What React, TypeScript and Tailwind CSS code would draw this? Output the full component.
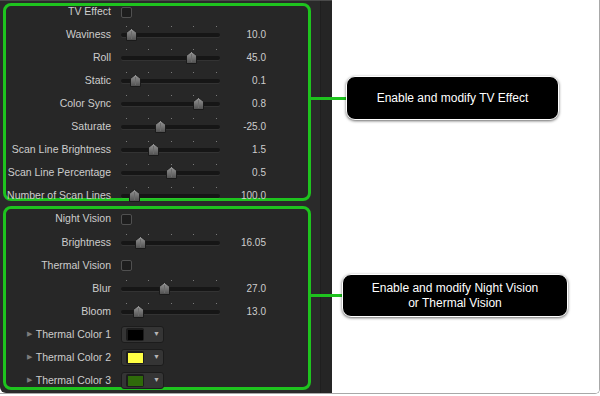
import type { ReactNode } from "react";

const tvRows = [
  { label: "Waviness", value: "10.0", pos: 10 },
  { label: "Roll", value: "45.0", pos: 70 },
  { label: "Static", value: "0.1", pos: 14 },
  { label: "Color Sync", value: "0.8", pos: 77 },
  { label: "Saturate", value: "-25.0", pos: 39 },
  { label: "Scan Line Brightness", value: "1.5", pos: 32 },
  { label: "Scan Line Percentage", value: "0.5", pos: 50 },
  { label: "Number of Scan Lines", value: "100.0", pos: 13 },
];

const thermalColors = [
  { label: "Thermal Color 1", color: "#000000" },
  { label: "Thermal Color 2", color: "#ffff44" },
  { label: "Thermal Color 3", color: "#2f6a0a" },
];

const ticks = [5, 27, 50, 72, 95];

function Thumb() {
  return (
    <svg width="11" height="13" viewBox="0 0 11 13">
      <defs>
        <linearGradient id="thumbG" x1="0" y1="0" x2="0" y2="1">
          <stop offset="0" stopColor="#9a9a9a" />
          <stop offset="1" stopColor="#4e4e4e" />
        </linearGradient>
      </defs>
      <path
        d="M5.5 0.5 L10.5 4.5 L10.5 12.5 L0.5 12.5 L0.5 4.5 Z"
        fill="url(#thumbG)"
        stroke="#1a1a1a"
        strokeWidth="1"
      />
      <line x1="5.5" y1="3" x2="5.5" y2="11" stroke="#6a6a6a" strokeWidth="1" />
    </svg>
  );
}

function Slider({ pos }: { pos: number }) {
  return (
    <div className="relative w-[99px] h-[23px]">
      {ticks.map((t) => (
        <div
          key={t}
          className="absolute top-[3px] w-px h-px bg-[#7a7a7a]"
          style={{ left: t }}
        />
      ))}
      <div className="absolute left-0 right-0 top-[10px] h-[4px] rounded-full bg-[#161616] shadow-[0_1px_0_rgba(255,255,255,0.06)]" />
      <div className="absolute top-[5px]" style={{ left: pos - 5 }}>
        <Thumb />
      </div>
    </div>
  );
}

function Checkbox() {
  return (
    <div className="w-[11px] h-[11px] rounded-[2px] border border-[#505050] bg-[#1d1d1d]" />
  );
}

function Row({
  label,
  children,
  value,
  caret,
}: {
  label: string;
  children: ReactNode;
  value?: string;
  caret?: boolean;
}) {
  return (
    <div className="flex items-center h-[23px]">
      <div className="w-[105px] flex items-center">
        {caret && <span className="ml-[21px] text-[7px] text-[#7c7c7c]">▶</span>}
        <span className="flex-1 text-right text-[10.5px] text-[#cdcdcd] whitespace-nowrap">
          {label}
        </span>
      </div>
      <div className="ml-[10px] flex items-center">{children}</div>
      {value && (
        <div className="w-[46px] text-right text-[10px] text-[#cdcdcd]">{value}</div>
      )}
    </div>
  );
}

function ColorWell({ color }: { color: string }) {
  return (
    <div className="flex items-center w-[43px] h-[17px] rounded-[3px] bg-[#353535] border border-[#1c1c1c]">
      <div className="ml-[4px] w-[18px] h-[13px] rounded-[2px] bg-[#1c1c1c] flex items-center justify-center">
        <div className="w-[15px] h-[10px]" style={{ background: color }} />
      </div>
      <span className="ml-[9px] text-[7px] text-[#b5b5b5]">▼</span>
    </div>
  );
}

export default function App() {
  return (
    <div
      className="w-[600px] h-[396px] bg-white relative"
      style={{ fontFamily: '"Liberation Sans", Arial, sans-serif' }}
    >
      <div className="flex w-[600px] h-[394px] border-r border-b border-[#a8a8a8] rounded-br-[5px] overflow-hidden">
        {/* Inspector panel */}
        <div className="flex w-[332px] h-full bg-[#2a2a2a] border-t border-[#4a4a4a] rounded-bl-[6px]">
          <div className="flex flex-col pl-[3px] pt-[2px]">
            {/* TV effect group */}
            <div className="w-[308px] h-[198px] rounded-[8px] border-[3px] border-[#1ec31e] bg-[#272727]">
              <div className="flex items-center h-[12px]">
                <div className="w-[105px] text-right text-[10.5px] text-[#cdcdcd]">TV Effect</div>
                <div className="ml-[10px]">
                  <Checkbox />
                </div>
              </div>
              <div className="mt-[5px] flex flex-col">
                {tvRows.map((r) => (
                  <Row key={r.label} label={r.label} value={r.value}>
                    <Slider pos={r.pos} />
                  </Row>
                ))}
              </div>
            </div>

            {/* Night / thermal group */}
            <div className="mt-[5px] w-[308px] h-[184px] rounded-[8px] border-[3px] border-[#1ec31e] bg-[#272727]">
              <div className="flex items-center h-[20px]">
                <div className="w-[105px] text-right text-[10.5px] text-[#cdcdcd]">Night Vision</div>
                <div className="ml-[10px]">
                  <Checkbox />
                </div>
              </div>
              <div className="mt-[2px] flex flex-col">
                <Row label="Brightness" value="16.05">
                  <Slider pos={19} />
                </Row>
                <Row label="Thermal Vision">
                  <Checkbox />
                </Row>
                <Row label="Blur" value="27.0">
                  <Slider pos={43} />
                </Row>
                <Row label="Bloom" value="13.0">
                  <Slider pos={17} />
                </Row>
                {thermalColors.map((c) => (
                  <Row key={c.label} label={c.label} caret>
                    <ColorWell color={c.color} />
                  </Row>
                ))}
              </div>
            </div>
          </div>
          <div className="ml-auto w-[12px] h-full bg-[#252525] border-l border-[#1f1f1f]" />
        </div>
        <div className="flex-1 bg-white" />
      </div>

      {/* Callouts */}
      <div className="absolute left-[311px] top-[97px] w-[36px] h-[3px] bg-[#1ec31e]" />
      <div className="absolute left-[346px] top-[76px] w-[213px] h-[44px] rounded-[9px] bg-black border-[1.5px] border-white shadow-[0_1px_3px_rgba(0,0,0,0.6)] flex items-center justify-center text-[12px] text-white">
        Enable and modify TV Effect
      </div>

      <div className="absolute left-[311px] top-[294px] w-[32px] h-[3px] bg-[#1ec31e]" />
      <div className="absolute left-[342px] top-[274px] w-[226px] h-[43px] rounded-[9px] bg-black border-[1.5px] border-white shadow-[0_1px_3px_rgba(0,0,0,0.6)] flex flex-col items-center justify-center text-[12px] leading-[15px] text-white text-center">
        <span>Enable and modify Night Vision</span>
        <span>or Thermal Vision</span>
      </div>
    </div>
  );
}
